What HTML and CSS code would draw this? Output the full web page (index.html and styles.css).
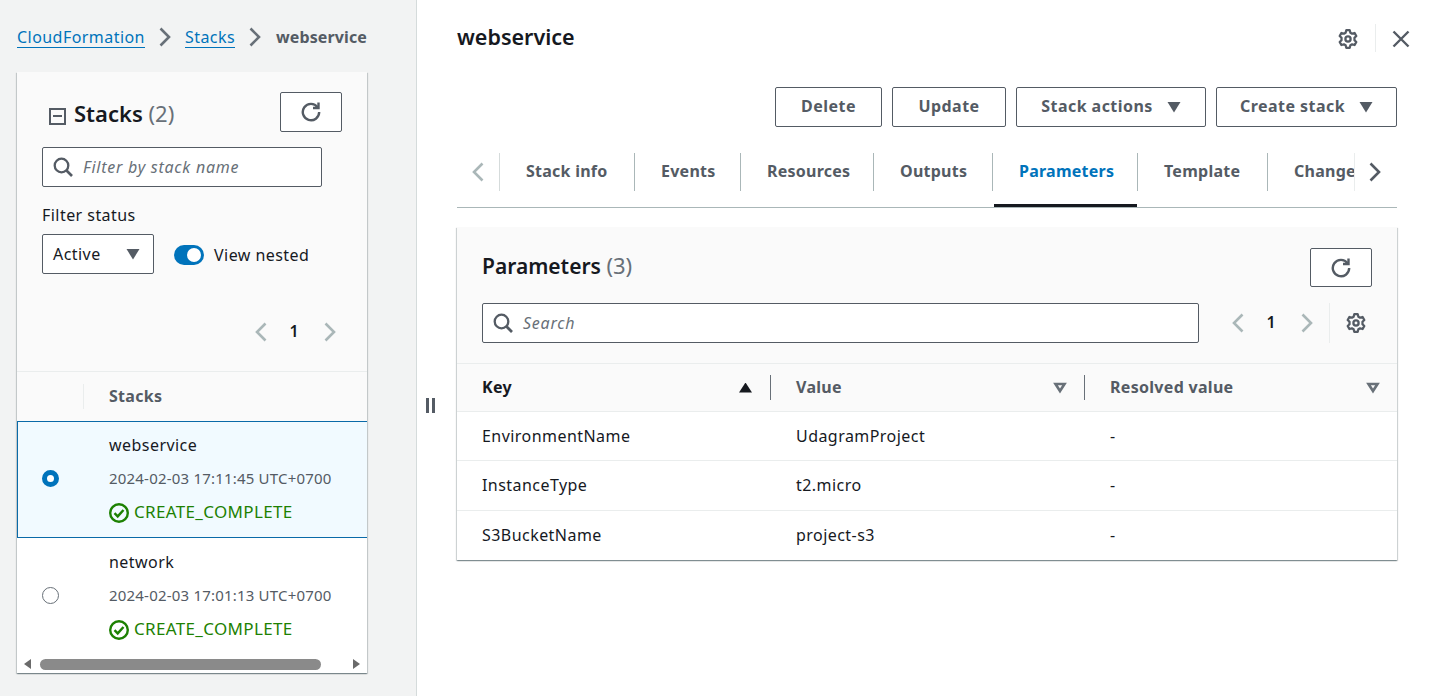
FILE: index.html
```html
<!DOCTYPE html>
<html>

<head>
    <meta charset="UTF-8">
    <title>webservice - CloudFormation</title>
    <link rel="stylesheet" href="styles.css">
</head>

<body>
    <svg xmlns="http://www.w3.org/2000/svg" class="sprite">
        <symbol id="refresh" viewBox="0 0 20 20" fill="none" stroke="currentColor" stroke-width="2.4">
            <path d="M16.6 5.2A8.2 8.2 0 1 0 18.2 10" />
            <path d="M17.5 0.5V6H12" stroke-linejoin="miter" />
        </symbol>
        <symbol id="search" viewBox="0 0 20 20" fill="none" stroke="currentColor" stroke-width="2.3">
            <circle cx="8.5" cy="8.5" r="6.8" />
            <path d="M13.5 13.5l5.5 5.5" stroke-width="2.7" />
        </symbol>
        <symbol id="gear" viewBox="0 0 20 20" fill="none" stroke="currentColor" stroke-width="2.3" stroke-linejoin="round">
            <circle cx="10" cy="10" r="2.6" />
            <path d="M8.3 1.2h3.4l.7 2.5 1.7 1 2.5-.7 1.7 3-1.8 1.8v2.4l1.8 1.8-1.7 3-2.5-.7-1.7 1-.7 2.5H8.3l-.7-2.5-1.7-1-2.5.7-1.7-3 1.8-1.8V8.8L1.7 7l1.7-3 2.5.7 1.7-1z" />
        </symbol>
        <symbol id="chev-left" viewBox="0 0 12 20" fill="none" stroke="currentColor" stroke-width="2.6">
            <path d="M10.5 1.5L2 10l8.5 8.5" />
        </symbol>
        <symbol id="chev-right" viewBox="0 0 12 20" fill="none" stroke="currentColor" stroke-width="2.6">
            <path d="M1.5 1.5L10 10l-8.5 8.5" />
        </symbol>
        <symbol id="caret-down" viewBox="0 0 14 12">
            <path d="M0.5 1h13L7 11.5z" fill="currentColor" />
        </symbol>
        <symbol id="sort" viewBox="0 0 14 12" fill="none" stroke="currentColor" stroke-width="2.6">
            <path d="M2.5 2h9L7 9z" />
        </symbol>
        <symbol id="ok" viewBox="0 0 20 20" fill="none" stroke="currentColor" stroke-width="2.4">
            <circle cx="10" cy="10" r="8.8" />
            <path d="M5.5 10.2l3.2 3.2 5.8-6.4" />
        </symbol>
    </svg>

    <div class="app">
        <aside class="side">
            <nav class="crumbs">
                <a href="#">CloudFormation</a>
                <svg class="crumb-sep"><use href="#chev-right" /></svg>
                <a href="#">Stacks</a>
                <svg class="crumb-sep"><use href="#chev-right" /></svg>
                <span class="crumb-current">webservice</span>
            </nav>

            <section class="card stacks">
                <div class="stacks-head">
                    <div class="stacks-title-row">
                        <h2 class="stacks-title">
                            <span class="collapse"></span>
                            <span>Stacks <span class="count">(2)</span></span>
                        </h2>
                        <button class="btn btn-icon"><svg class="icon"><use href="#refresh" /></svg></button>
                    </div>
                    <div class="input input-narrow">
                        <svg class="icon"><use href="#search" /></svg>
                        <span>Filter by stack name</span>
                    </div>
                    <div class="filter-label">Filter status</div>
                    <div class="filter-row">
                        <div class="select">Active <svg class="caret"><use href="#caret-down" /></svg></div>
                        <span class="toggle"><span class="toggle-knob"></span></span>
                        <span class="toggle-label">View nested</span>
                    </div>
                    <div class="pager pager-stacks">
                        <svg class="chev off"><use href="#chev-left" /></svg>
                        <span class="page">1</span>
                        <svg class="chev off"><use href="#chev-right" /></svg>
                    </div>
                </div>

                <div class="stacks-cols">
                    <span class="stacks-col-sep"></span>
                    <span class="stacks-col-name">Stacks</span>
                </div>

                <div class="stack-row selected">
                    <span class="radio"></span>
                    <div class="stack-info">
                        <div class="stack-name">webservice</div>
                        <div class="stack-date">2024-02-03 17:11:45 UTC+0700</div>
                        <div class="stack-status"><svg class="ok"><use href="#ok" /></svg>CREATE_COMPLETE</div>
                    </div>
                </div>
                <div class="stack-row">
                    <span class="radio"></span>
                    <div class="stack-info">
                        <div class="stack-name">network</div>
                        <div class="stack-date">2024-02-03 17:01:13 UTC+0700</div>
                        <div class="stack-status"><svg class="ok"><use href="#ok" /></svg>CREATE_COMPLETE</div>
                    </div>
                </div>

                <div class="hscroll">
                    <span class="arrow-left"></span>
                    <span class="thumb"></span>
                    <span class="arrow-right"></span>
                </div>
            </section>
        </aside>

        <div class="splitter"><span class="grip"></span></div>

        <main class="detail">
            <header class="detail-head">
                <h1>webservice</h1>
                <svg class="icon gear head-gear"><use href="#gear" /></svg>
                <span class="head-sep"></span>
                <svg class="close" viewBox="0 0 18 18" fill="none" stroke="currentColor" stroke-width="2.4"><path d="M1.5 1.5l15 15M16.5 1.5l-15 15" /></svg>
            </header>

            <div class="actions">
                <button class="btn btn-delete"><span class="btn-text">Delete</span></button>
                <button class="btn btn-update"><span class="btn-text">Update</span></button>
                <button class="btn btn-stack"><span class="btn-text">Stack actions</span> <svg class="caret"><use href="#caret-down" /></svg></button>
                <button class="btn btn-create"><span class="btn-text">Create stack</span> <svg class="caret"><use href="#caret-down" /></svg></button>
            </div>

            <div class="tabs">
                <svg class="chev tab-prev off"><use href="#chev-left" /></svg>
                <div class="tab-list">
                    <a class="tab">Stack info</a>
                    <a class="tab">Events</a>
                    <a class="tab">Resources</a>
                    <a class="tab">Outputs</a>
                    <a class="tab active">Parameters</a>
                    <a class="tab">Template</a>
                    <a class="tab">Change sets</a>
                </div>
                <svg class="chev tab-next"><use href="#chev-right" /></svg>
            </div>

            <section class="card params">
                <div class="params-head">
                    <div class="params-title-row">
                        <h2 class="params-title">Parameters <span class="count">(3)</span></h2>
                        <button class="btn btn-icon"><svg class="icon"><use href="#refresh" /></svg></button>
                    </div>
                    <div class="params-tools">
                        <div class="input input-wide">
                            <svg class="icon"><use href="#search" /></svg>
                            <span>Search</span>
                        </div>
                        <div class="pager">
                            <svg class="chev off"><use href="#chev-left" /></svg>
                            <span class="page">1</span>
                            <svg class="chev off"><use href="#chev-right" /></svg>
                        </div>
                        <span class="tools-sep"></span>
                        <svg class="icon gear"><use href="#gear" /></svg>
                    </div>
                </div>

                <div class="grid grid-head">
                    <div class="col col-sorted"><span class="col-text">Key</span> <span class="sort-up"></span></div>
                    <div class="col col-value"><span class="col-text">Value</span> <svg class="sort"><use href="#sort" /></svg></div>
                    <div class="col col-last"><span class="col-text">Resolved value</span> <svg class="sort"><use href="#sort" /></svg></div>
                </div>
                <div class="grid grid-row row-short">
                    <div>EnvironmentName</div>
                    <div>UdagramProject</div>
                    <div>-</div>
                </div>
                <div class="grid grid-row">
                    <div>InstanceType</div>
                    <div>t2.micro</div>
                    <div>-</div>
                </div>
                <div class="grid grid-row row-short">
                    <div>S3BucketName</div>
                    <div>project-s3</div>
                    <div>-</div>
                </div>
            </section>
        </main>
    </div>
</body>

</html>
```

FILE: styles.css
```css
body,
html {
    margin: 0;
    height: 100%;
    overflow: hidden;
    background: #fff;
    color: #16191f;
    font-family: 'Noto Sans', 'Open Sans', sans-serif;
    font-size: 16px;
    letter-spacing: .45px;
}

h1,
h2 {
    margin: 0;
    letter-spacing: 0;
}

a {
    color: #0073bb;
}

.sprite {
    display: none;
}

.app {
    display: flex;
    height: 696px;
}

.icon {
    width: 20px;
    height: 20px;
    color: #545b64;
    flex: none;
}

.caret {
    width: 14px;
    height: 12px;
    color: #545b64;
    flex: none;
}

.chev {
    width: 12px;
    height: 20px;
    color: #545b64;
    flex: none;
}

.chev.off {
    color: #aab7b8;
}

.count {
    color: #687078;
    font-size: 22px;
    font-weight: 400;
}

/* left side */

.side {
    box-sizing: border-box;
    width: 417px;
    height: 696px;
    padding: 0 49px 0 17px;
    background: #f2f3f3;
    border-right: 1px solid #d5dbdb;
}

.crumbs {
    display: flex;
    align-items: center;
    height: 72px;
    padding-top: 2px;
    box-sizing: border-box;
}

.crumbs a {
    text-decoration: none;
    border-bottom: 1px solid #0073bb;
    line-height: 20px;
}

.crumb-sep {
    width: 12px;
    height: 20px;
    margin: 0 14px;
    color: #687078;
}

.crumb-current {
    color: #545b64;
    font-weight: 700;
    letter-spacing: .1px;
    margin-left: 1px;
}

.card {
    background: #fff;
    box-shadow: 0 1px 1px 0 rgba(0, 28, 36, .3), 1px 1px 1px 0 rgba(0, 28, 36, .15), -1px 1px 1px 0 rgba(0, 28, 36, .15);
}

.stacks {
    height: 601px;
    display: flex;
    flex-direction: column;
}

.stacks-head {
    box-sizing: border-box;
    height: 300px;
    padding: 20px 25px 0 25px;
    background: #fafafa;
    border-bottom: 1px solid #eaeded;
}

.stacks-title-row {
    display: flex;
    justify-content: space-between;
    align-items: flex-start;
}

.stacks-title {
    display: flex;
    align-items: center;
    gap: 8px;
    margin: 6px 0 0 7px;
    font-size: 22px;
    line-height: 30px;
    font-weight: 600;
}

.collapse {
    box-sizing: border-box;
    position: relative;
    top: 3px;
    width: 17px;
    height: 17px;
    border: 2px solid #545b64;
    display: flex;
    align-items: center;
    justify-content: center;
}

.collapse::after {
    content: "";
    width: 9px;
    height: 2px;
    background: #545b64;
}

.btn {
    box-sizing: border-box;
    height: 40px;
    padding: 0;
    background: #fff;
    border: 1px solid #545b64;
    border-radius: 2px;
    color: #545b64;
    font-family: inherit;
    font-size: 16px;
    font-weight: 700;
    letter-spacing: .45px;
    display: flex;
    align-items: center;
    justify-content: center;
}

.btn-text {
    margin-bottom: 2px;
}

.btn-icon {
    width: 62px;
}

.input {
    box-sizing: border-box;
    height: 40px;
    display: flex;
    align-items: center;
    gap: 10px;
    padding-left: 10px;
    background: #fff;
    border: 1px solid #545b64;
    border-radius: 2px;
    color: #687078;
    font-style: italic;
    letter-spacing: .75px;
}

.input-narrow {
    width: 280px;
    margin-top: 15px;
}

.input-wide {
    width: 717px;
}

.filter-label {
    margin-top: 17px;
    line-height: 22px;
}

.filter-row {
    display: flex;
    align-items: center;
    margin-top: 8px;
}

.select {
    box-sizing: border-box;
    width: 112px;
    height: 40px;
    display: flex;
    align-items: center;
    justify-content: space-between;
    padding: 0 13px 0 10px;
    background: #fff;
    border: 1px solid #545b64;
    border-radius: 2px;
}

.toggle {
    display: flex;
    align-items: center;
    justify-content: flex-end;
    box-sizing: border-box;
    width: 30px;
    height: 20px;
    margin: 2px 10px 0 20px;
    padding-right: 3px;
    background: #0073bb;
    border-radius: 10px;
}

.toggle-knob {
    width: 14px;
    height: 14px;
    background: #fff;
    border-radius: 50%;
}

.toggle-label {
    margin-top: 2px;
}

.pager {
    display: flex;
    align-items: center;
    font-weight: 600;
}

.pager-stacks {
    justify-content: flex-end;
    margin-top: 48px;
    padding-right: 6px;
    height: 20px;
}

.page {
    width: 12px;
    margin: 0 24px 0 21px;
    text-align: center;
    position: relative;
    top: -1px;
    font-size: 16px;
    letter-spacing: 0;
}

.stacks-cols {
    box-sizing: border-box;
    height: 49px;
    display: flex;
    align-items: center;
    background: #fafafa;
}

.stacks-col-sep {
    width: 1px;
    height: 25px;
    margin-left: 66px;
    background: #eaeded;
}

.stacks-col-name {
    margin: 0 0 2px 25px;
    color: #545b64;
    font-weight: 700;
    letter-spacing: .3px;
}

.stack-row {
    box-sizing: border-box;
    height: 117px;
    display: flex;
    align-items: center;
    background: #fff;
    padding-left: 25px;
}

.stack-row.selected {
    background: #f1faff;
    border-top: 1px solid #0a6aa8;
    border-bottom: 1px solid #0a6aa8;
    border-left: 1px solid #0a6aa8;
    padding-left: 24px;
}

.radio {
    box-sizing: border-box;
    width: 17px;
    height: 17px;
    margin-bottom: 3px;
    border: 1.5px solid #687078;
    border-radius: 50%;
    background: #fff;
    flex: none;
}

.selected .radio {
    border: 5.5px solid #0073bb;
}

.stack-info {
    margin: 0 0 2px 50px;
    white-space: nowrap;
}

.stack-name {
    line-height: 22px;
}

.stack-date {
    margin-top: 11px;
    line-height: 22px;
    font-size: 15px;
    letter-spacing: .2px;
    color: #545b64;
}

.stack-status {
    display: flex;
    align-items: center;
    gap: 5px;
    margin-top: 12px;
    line-height: 22px;
    font-size: 17px;
    letter-spacing: .33px;
    color: #1d8102;
}

.ok {
    width: 20px;
    height: 20px;
    color: #1d8102;
    position: relative;
    top: 1px;
}

.hscroll {
    flex: 1;
    display: flex;
    align-items: center;
    background: #fff;
    padding: 0 7px;
}

.arrow-left {
    border: 5px solid transparent;
    border-left: 0;
    border-right: 7px solid #6a6a6a;
}

.thumb {
    width: 281px;
    height: 11px;
    margin-left: 9px;
    background: #8a8a8a;
    border-radius: 6px;
}

.arrow-right {
    margin-left: auto;
    border: 5px solid transparent;
    border-right: 0;
    border-left: 7px solid #6a6a6a;
}

/* splitter */

.splitter {
    box-sizing: border-box;
    width: 40px;
    padding: 398px 0 0 9px;
}

.grip {
    display: block;
    box-sizing: border-box;
    width: 9px;
    height: 15px;
    border-left: 3px solid #545b64;
    border-right: 3px solid #545b64;
}

/* right side */

.detail {
    width: 940px;
}

.detail-head {
    display: flex;
    align-items: center;
    height: 76px;
}

.detail-head h1 {
    flex: 1;
    margin-bottom: 2px;
    font-size: 21.5px;
    font-weight: 600;
    line-height: 30px;
}

.head-gear {
    margin-top: 2px;
}

.head-sep {
    width: 1px;
    height: 28px;
    margin: 0 16px 0 17px;
    background: #eaeded;
}

.close {
    width: 18px;
    height: 18px;
    margin: 2px -13px 0 0;
    color: #545b64;
}

.actions {
    display: flex;
    justify-content: flex-end;
    gap: 10px;
    margin-top: 11px;
}

.btn-delete {
    width: 107px;
}

.btn-update {
    width: 114px;
}

.btn-stack {
    width: 190px;
    gap: 14px;
}

.btn-create {
    width: 181px;
    gap: 14px;
}

.tabs {
    display: flex;
    align-items: flex-start;
    height: 81px;
    border-bottom: 1px solid #aab7b8;
    box-sizing: border-box;
}

.tab-prev {
    margin: 35px 15px 0 15px;
}

.tab-next {
    margin: 35px 0 0 14px;
}

.tab-list {
    display: grid;
    grid-template-columns: 135px 106px 133px 119px 145px 130px 200px;
    box-sizing: border-box;
    width: 856px;
    height: 80px;
    padding: 26px 0 0 1px;
    overflow: hidden;
    position: relative;
}

/* left divider and the edge where the tabs get clipped */
.tab-list::before {
    content: "";
    position: absolute;
    left: 0;
    top: 26px;
    width: 1px;
    height: 38px;
    background: #d5dbdb;
}

.tab-list::after {
    content: "";
    position: absolute;
    right: 0;
    top: 26px;
    width: 1px;
    height: 38px;
    background: #eaeded;
}

.tab {
    box-sizing: border-box;
    height: 54px;
    padding-left: 26px;
    color: #545b64;
    font-weight: 700;
    letter-spacing: .25px;
    white-space: nowrap;
    position: relative;
    line-height: 36px;
}

.tab::after {
    content: "";
    position: absolute;
    right: 0;
    top: 0;
    width: 1px;
    height: 38px;
    background: #aab7b8;
}

.tab:last-child::after {
    display: none;
}

.tab.active {
    color: #0073bb;
}

.tab.active::before {
    content: "";
    position: absolute;
    left: 1px;
    right: 1px;
    bottom: 0;
    height: 3px;
    background: #16191f;
}

.params {
    margin-top: 19px;
    height: 333px;
}

.params-head {
    box-sizing: border-box;
    height: 137px;
    padding: 21px 25px 0 25px;
    background: #fafafa;
    border-bottom: 1px solid #eaeded;
}

.params-title-row {
    display: flex;
    justify-content: space-between;
    align-items: center;
}

.params-title-row .btn-icon {
    height: 39px;
}

.params-title {
    margin-bottom: 5px;
    font-size: 21px;
    line-height: 30px;
    font-weight: 600;
}

.params-tools {
    display: flex;
    align-items: center;
    margin-top: 16px;
}

.params-tools .pager {
    margin-left: 33px;
}

.tools-sep {
    width: 1px;
    height: 40px;
    margin: 0 16px 0 16px;
    background: #eaeded;
}

.grid {
    display: grid;
    grid-template-columns: 314px 314px 312px;
    box-sizing: border-box;
}

.grid > div {
    box-sizing: border-box;
    padding-left: 25px;
}

.grid-head {
    height: 48px;
    align-items: center;
    background: #fafafa;
    border-bottom: 1px solid #eaeded;
    color: #545b64;
    font-weight: 700;
    letter-spacing: .3px;
}

.col {
    display: flex;
    align-items: center;
    justify-content: space-between;
    height: 25px;
    padding-right: 17px;
    border-right: 1px solid #687078;
}

.col-text {
    margin-bottom: 1px;
}

.col-sorted {
    color: #16191f;
    padding-right: 18px;
}

.col-last {
    border-right: 0;
}

.sort-up {
    width: 13px;
    height: 10px;
    background: #16191f;
    clip-path: polygon(50% 0, 100% 100%, 0 100%);
}

.sort {
    width: 14px;
    height: 12px;
    color: #687078;
}

.grid-row {
    height: 50px;
    align-items: center;
    padding-bottom: 1px;
    border-bottom: 1px solid #eaeded;
    color: #16191f;
}

.row-short {
    height: 49px;
}

.grid-row:last-child {
    border-bottom: 0;
}
```
